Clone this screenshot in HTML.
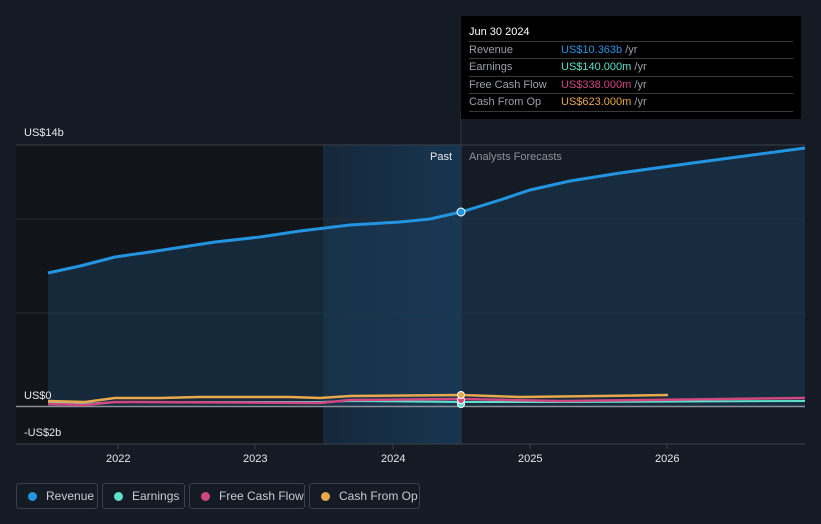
<!DOCTYPE html>
<html><head><style>
body{margin:0;background:#151b24;font-family:"Liberation Sans",sans-serif;}
.lg{position:absolute;top:483px;height:26px;border:1px solid #3a3f48;border-radius:3px;color:#c8ccd2;font-size:12px;line-height:24px;box-sizing:border-box;white-space:nowrap;overflow:hidden}
.lg i{display:inline-block;width:9px;height:9px;border-radius:50%;margin:0 9px 0 11px;vertical-align:-1px}
</style></head><body>
<div style="position:relative;width:821px;height:524px;overflow:hidden">
<svg width="821" height="524" style="position:absolute;left:0;top:0">
<defs><linearGradient id="g" x1="0" x2="1"><stop offset="0" stop-color="#16283a"/><stop offset="1" stop-color="#173550"/></linearGradient></defs>
<rect x="16" y="145" width="307" height="299" fill="#111419"/>
<rect x="323" y="145" width="138" height="299" fill="url(#g)"/>
<line x1="16" y1="145" x2="805" y2="145" stroke="#3a404a"/>
<line x1="16" y1="219" x2="805" y2="219" stroke="#262d37"/>
<line x1="16" y1="313" x2="805" y2="313" stroke="#262d37"/>
<line x1="16" y1="444" x2="805" y2="444" stroke="#3a404a"/>
<line x1="461" y1="110" x2="461" y2="444" stroke="#2a3a4c"/>
<path d="M48,273 L80,266 115,257 150,252 215,242 260,237 300,231 350,225 400,222 430,219 461,212 500,200 530,190 570,181 620,173 700,162 760,154 805,148 L805,406 L48,406 Z" fill="#1c3a58" opacity="0.55"/>
<path d="M48,273 L80,266 115,257 150,252 215,242 260,237 300,231 350,225 400,222 430,219 461,212 500,200 530,190 570,181 620,173 700,162 760,154 805,148" fill="none" stroke="#2394e0" stroke-width="3"/>
<line x1="16" y1="406.5" x2="805" y2="406.5" stroke="#8a9098" stroke-width="1.5"/>
<path d="M48,403 L85,404 115,402 320,402 350,401 461,402 560,402 805,401" fill="none" stroke="#5ee0cc" stroke-width="2"/>
<path d="M48,404 L85,405 115,402 320,403 350,400 461,399 560,401 805,398" fill="none" stroke="#d0467f" stroke-width="2.5"/>
<path d="M48,401 L85,402 115,398 160,398 200,397 290,397 320,398 350,396 461,395 520,397 600,396 668,395" fill="none" stroke="#e8a94c" stroke-width="2.5"/>
<circle cx="461" cy="212" r="4" fill="#2394e0" stroke="#fff" stroke-width="1"/>
<circle cx="461" cy="404" r="3.5" fill="#5ee0cc" stroke="#fff" stroke-width="1"/>
<circle cx="461" cy="400" r="3.5" fill="#d0467f" stroke="#fff" stroke-width="1"/>
<circle cx="461" cy="395" r="3.5" fill="#e8a94c" stroke="#fff" stroke-width="1"/>
<g fill="#c8ccd2" font-size="11">
<text x="24" y="136" fill="#e6e8eb">US$14b</text>
<text x="24" y="399" fill="#e6e8eb">US$0</text>
<text x="24" y="436" fill="#e6e8eb">-US$2b</text>
<text x="430" y="160" fill="#e6e8eb">Past</text>
<text x="469" y="160" fill="#8d939b">Analysts Forecasts</text>
<text x="106" y="462" fill="#e6e8eb">2022</text>
<text x="243" y="462" fill="#e6e8eb">2023</text>
<text x="381" y="462" fill="#e6e8eb">2024</text>
<text x="518" y="462" fill="#e6e8eb">2025</text>
<text x="655" y="462" fill="#e6e8eb">2026</text>
</g>
<g stroke="#3a404a"><line x1="118" y1="444" x2="118" y2="449"/><line x1="255" y1="444" x2="255" y2="449"/><line x1="393" y1="444" x2="393" y2="449"/><line x1="530" y1="444" x2="530" y2="449"/><line x1="667" y1="444" x2="667" y2="449"/></g>
<rect x="461" y="16" width="340" height="103" fill="#000"/>
<g stroke="#3a3a3a"><line x1="469" y1="41.5" x2="793" y2="41.5"/><line x1="469" y1="58.5" x2="793" y2="58.5"/><line x1="469" y1="76.5" x2="793" y2="76.5"/><line x1="469" y1="93.5" x2="793" y2="93.5"/><line x1="469" y1="111.5" x2="793" y2="111.5"/></g>
<g font-size="11">
<text x="469" y="35" fill="#fff">Jun 30 2024</text>
<text x="469" y="53" fill="#9aa0a8">Revenue</text><text x="561" y="53" fill="#2394e0">US$10.363b <tspan fill="#9aa0a8">/yr</tspan></text>
<text x="469" y="70" fill="#9aa0a8">Earnings</text><text x="561" y="70" fill="#5ee0cc">US$140.000m <tspan fill="#9aa0a8">/yr</tspan></text>
<text x="469" y="88" fill="#9aa0a8">Free Cash Flow</text><text x="561" y="88" fill="#d0467f">US$338.000m <tspan fill="#9aa0a8">/yr</tspan></text>
<text x="469" y="105" fill="#9aa0a8">Cash From Op</text><text x="561" y="105" fill="#e8a94c">US$623.000m <tspan fill="#9aa0a8">/yr</tspan></text>
</g>
</svg>
<div class="lg" style="left:16px;width:82px"><i style="background:#2394e0"></i>Revenue</div>
<div class="lg" style="left:102px;width:83px"><i style="background:#5ee0cc"></i>Earnings</div>
<div class="lg" style="left:189px;width:116px"><i style="background:#d0467f"></i>Free Cash Flow</div>
<div class="lg" style="left:309px;width:111px"><i style="background:#e8a94c"></i>Cash From Op</div>
</div>
</body></html>
